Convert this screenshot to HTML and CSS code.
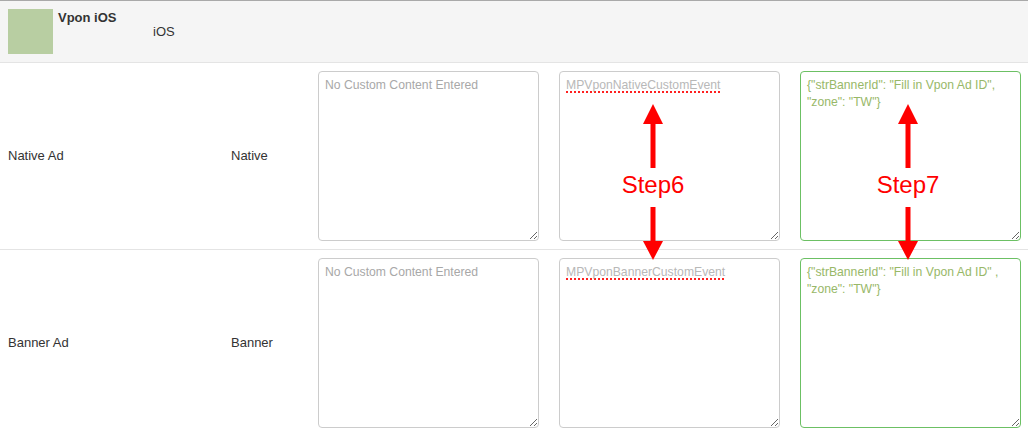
FILE: index.html
```html
<!DOCTYPE html>
<html>
<head>
<meta charset="utf-8">
<link rel="stylesheet" href="styles.css">
</head>
<body>
<div class="page">
  <div class="head-row">
    <div class="logo"></div>
    <div class="app-name">Vpon iOS</div>
    <div class="platform">iOS</div>
  </div>
  <div class="row">
    <div class="label">Native Ad</div>
    <div class="type">Native</div>
    <div class="fields">
      <div class="field placeholder">No Custom Content Entered</div>
      <div class="field muted"><span class="misspelled">MPVponNativeCustomEvent</span></div>
      <div class="field green">{"strBannerId": "Fill in Vpon Ad ID", "zone": "TW"}</div>
    </div>
  </div>
  <div class="row">
    <div class="label">Banner Ad</div>
    <div class="type">Banner</div>
    <div class="fields">
      <div class="field placeholder">No Custom Content Entered</div>
      <div class="field muted"><span class="misspelled">MPVponBannerCustomEvent</span></div>
      <div class="field green">{"strBannerId": "Fill in Vpon Ad ID" , "zone": "TW"}</div>
    </div>
  </div>
  <svg class="annot" width="1028" height="436" viewBox="0 0 1028 436">
    <g fill="#ff0000">
      <polygon points="653,104 643,124 663,124"/>
      <rect x="650.5" y="122" width="5" height="46"/>
      <rect x="650.5" y="207" width="5" height="36"/>
      <polygon points="643,241 663,241 653,260"/>
      <text x="653" y="193" text-anchor="middle" class="step">Step6</text>
      <polygon points="908,104 898,124 918,124"/>
      <rect x="905.5" y="122" width="5" height="46"/>
      <rect x="905.5" y="207" width="5" height="36"/>
      <polygon points="898,241 918,241 908,260"/>
      <text x="908" y="193" text-anchor="middle" class="step">Step7</text>
    </g>
  </svg>
</div>
</body>
</html>
```
FILE: styles.css
```css
html, body {
  margin: 0;
  padding: 0;
  background: #ffffff;
}
body {
  font-family: "Liberation Sans", Arial, sans-serif;
  font-size: 13px;
  color: #333333;
}
.page {
  position: relative;
  width: 1028px;
  height: 436px;
  overflow: hidden;
}
.head-row {
  display: flex;
  align-items: flex-start;
  height: 61px;
  border-top: 1px solid #a9a9a9;
  border-bottom: 1px solid #e4e4e4;
  background: #f5f5f5;
}
.logo {
  width: 45px;
  height: 45px;
  margin: 8px 0 0 8px;
  background: #b8cea2;
}
.app-name {
  margin: 9px 0 0 5px;
  width: 95px;
  font-weight: bold;
  color: #333;
}
.platform {
  margin-top: 23px;
  color: #333;
}
.row {
  display: flex;
  align-items: center;
  padding: 8px 7px 8px 8px;
  border-bottom: 1px solid #e4e4e4;
}
.label {
  width: 223px;
  margin-top: -1px;
}
.type {
  width: 87px;
  margin-top: -1px;
}
.fields {
  display: flex;
  gap: 20px;
}
.field {
  box-sizing: border-box;
  width: 221px;
  height: 170px;
  border: 1px solid #cccccc;
  border-radius: 4px;
  padding: 5px 6px 6px;
  font-size: 12.2px;
  line-height: 17px;
  overflow: auto;
  resize: both;
  background: #fff;
}
.placeholder {
  color: #a8a8a8;
}
.muted {
  color: #b8b8b8;
}
.misspelled {
  text-decoration: underline dotted #ff2020;
  text-decoration-thickness: 2px;
  text-underline-offset: 2px;
  text-decoration-skip-ink: none;
}
.green {
  border-color: #6cc064;
  color: #98b868;
}
.annot {
  position: absolute;
  left: 0;
  top: 0;
  pointer-events: none;
}
.step {
  font-family: "Liberation Sans", Arial, sans-serif;
  font-size: 24px;
}
```
